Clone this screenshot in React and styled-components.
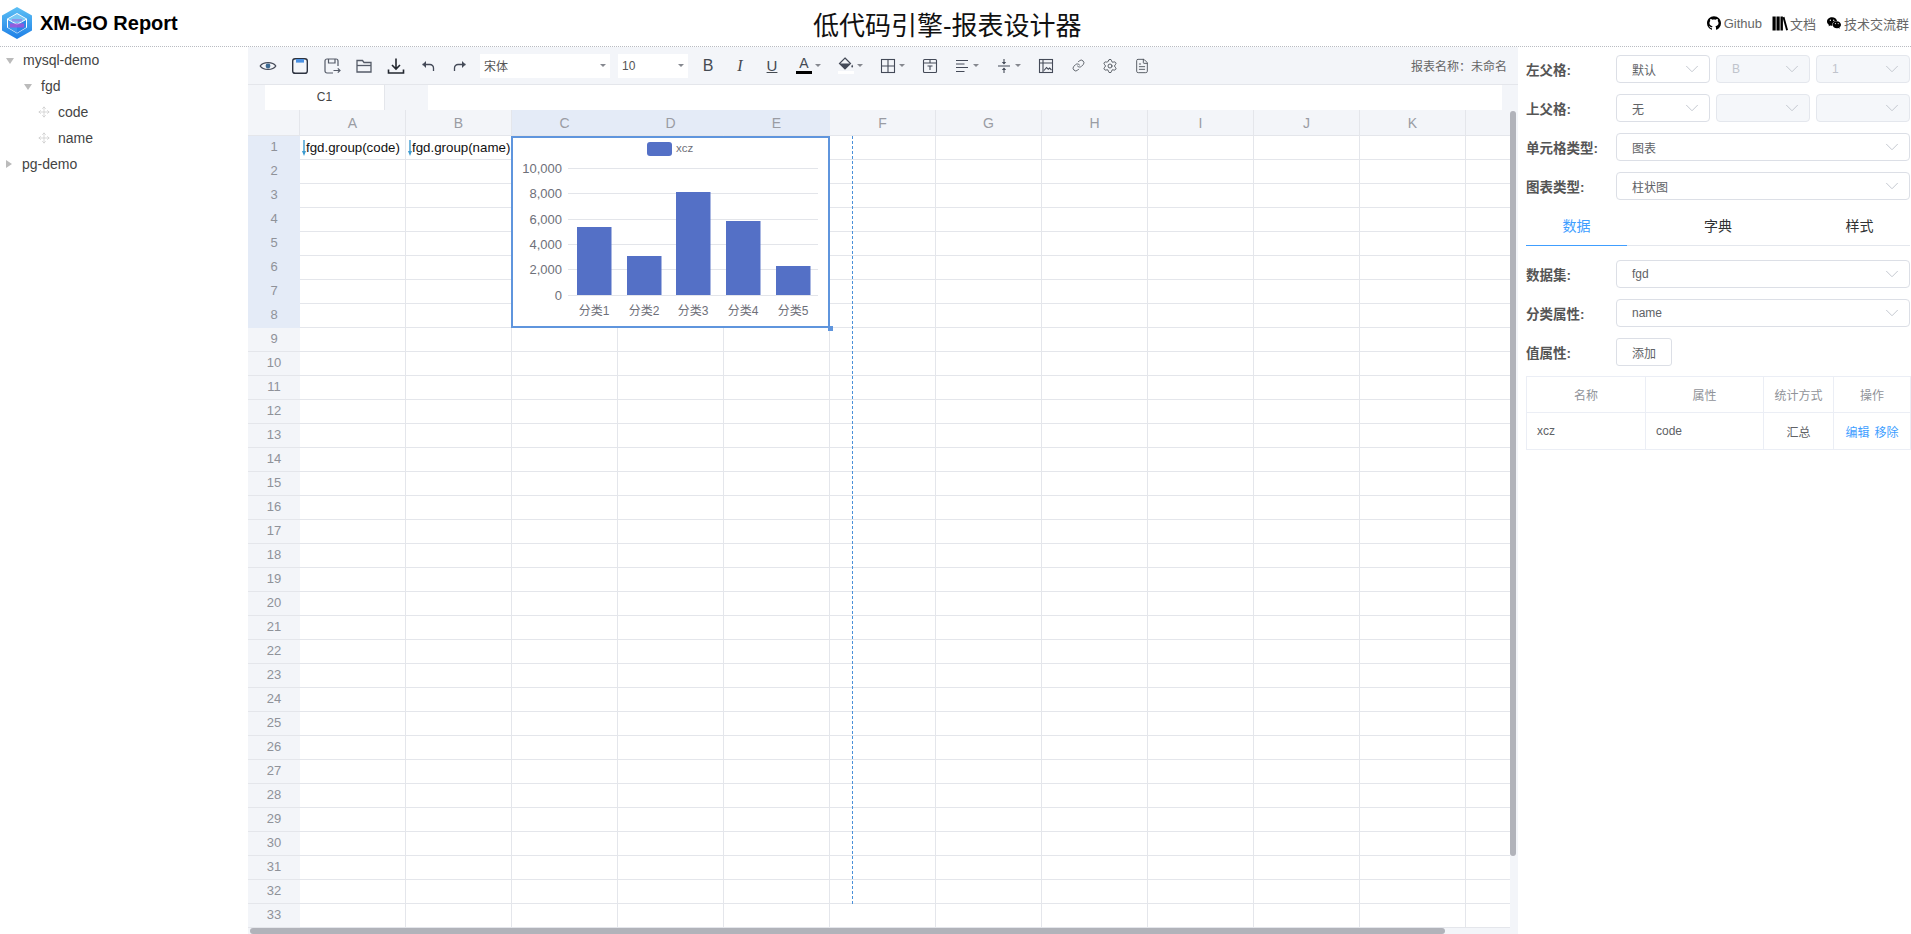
import React from 'react';
import styled, { createGlobalStyle } from 'styled-components';
import { AiFillGithub, AiFillWechat } from 'react-icons/ai';
import { Move, ChevronDown, Link, Settings, FileText } from 'lucide-react';

const FONT = '"Liberation Sans", "Noto Sans CJK SC", sans-serif';
const LINE = '#e4e6eb';
const BAR = '#f3f5f9';

const GlobalStyle = createGlobalStyle`
    html, body {
        margin: 0;
        height: 100%;
        overflow: hidden;
        background: #fff;
        font-family: ${FONT};
    }
`;

const Page = styled.div`
    display: flex;
    flex-direction: column;
    height: 934px;
    overflow: hidden;
`;

const Header = styled.header`
    display: flex;
    justify-content: space-between;
    align-items: center;
    height: 46px;
    flex: none;
    box-sizing: content-box;
    padding: 0 2px 0 1px;
    border-bottom: 1px dotted #b9bcc2;
`;

const Brand = styled.div`
    display: flex;
    align-items: center;
    gap: 7px;
    font-size: 20px;
    font-weight: 700;
    color: #000;
`;

const Title = styled.h1`
    margin: 0 0 0 11px;
    font-size: 26px;
    font-weight: 400;
    color: #111;
`;

const Links = styled.nav`
    display: flex;
    gap: 10px;
`;

const HeadLink = styled.a`
    display: flex;
    align-items: center;
    gap: 2px;
    font-size: 13px;
    color: #666;
    svg { color: #000; font-size: 16px; }
`;

const Main = styled.div`
    display: flex;
    flex: 1;
    min-height: 0;
`;

const Tree = styled.aside`
    width: 248px;
    flex: none;
`;

const TreeRow = styled.div`
    display: flex;
    align-items: center;
    height: 26px;
    padding-left: ${p => p.$depth * 18 + 6}px;
    font-size: 14px;
    color: #444;
`;

const Caret = styled.span`
    width: 0;
    height: 0;
    margin-right: 9px;
    border-style: solid;
    ${p => p.$open
        ? 'border-width: 6px 4px 0 4px; border-color: #bbb transparent transparent transparent; margin-top: 1px;'
        : 'border-width: 4px 0 4px 6px; border-color: transparent transparent transparent #bbb; margin-right: 10px;'}
`;

const Drag = styled.span`
    display: flex;
    width: 12px;
    margin-right: 8px;
    margin-left: -4px;
    color: #c8c8c8;
`;

const Sheet = styled.section`
    position: relative;
    display: flex;
    flex-direction: column;
    width: 1270px;
    flex: none;
    background: ${BAR};
`;

const Toolbar = styled.div`
    display: flex;
    align-items: center;
    height: 37px;
    flex: none;
    padding: 0 11px 0 4px;
    border-bottom: 1px solid ${LINE};
`;

const ToolBtn = styled.div`
    display: flex;
    align-items: center;
    justify-content: center;
    width: 32px;
    height: 24px;
    flex: none;
    margin-left: ${p => p.$gap || 0}px;
    font-size: ${p => p.$size || 16}px;
    color: #444a52;
`;

const SerifI = styled.em`
    font-family: "Liberation Serif", serif;
`;

const DropBtn = styled.div`
    display: flex;
    align-items: center;
    width: 42px;
    flex: none;
`;

const SmallCaret = styled.i`
    width: 0;
    height: 0;
    margin-left: -5px;
    border-style: solid;
    border-width: 3px 3px 0 3px;
    border-color: #85888f transparent transparent transparent;
`;

const ToolSelect = styled.div`
    display: flex;
    align-items: center;
    justify-content: space-between;
    width: ${p => p.$width}px;
    height: 24px;
    flex: none;
    margin-left: ${p => p.$gap}px;
    padding: 0 4px;
    box-sizing: border-box;
    background: #fff;
    font-size: 12px;
    color: #555;
`;

const ColorBar = styled.span`
    display: block;
    width: 16px;
    height: 3px;
    margin-top: 1px;
    background: ${p => p.$color};
`;

const Stack = styled.span`
    display: flex;
    flex-direction: column;
    align-items: center;
    line-height: 13px;
    font-size: 14px;
`;

const ReportName = styled.div`
    margin-left: auto;
    font-size: 12px;
    color: #666;
`;

const FormulaBar = styled.div`
    display: flex;
    height: 25px;
    flex: none;
    padding: 0 16px 0 17px;
`;

const NameBox = styled.div`
    width: 119px;
    flex: none;
    background: #fff;
    border-right: 1px solid ${LINE};
    text-align: center;
    font-size: 12px;
    line-height: 24px;
    color: #444;
`;

const FormulaInput = styled.div`
    flex: 1;
    margin-left: 43px;
    background: #fff;
`;

const GridWrap = styled.div`
    position: relative;
    width: 1262px;
    flex: 1;
    min-height: 0;
    overflow: hidden;
`;

const Grid = styled.div`
    display: grid;
    grid-template-columns: 52px repeat(12, 106px);
    grid-template-rows: 26px;
    grid-auto-rows: 24px;
`;

const ColHead = styled.div`
    display: flex;
    align-items: center;
    justify-content: center;
    box-sizing: border-box;
    background: ${p => (p.$active ? '#e4ebf7' : BAR)};
    border-right: 1px solid ${p => (p.$active ? '#e4ebf7' : LINE)};
    border-bottom: 1px solid ${LINE};
    font-size: 14px;
    color: #9a9ca3;
`;

const RowHead = styled.div`
    display: flex;
    align-items: center;
    justify-content: center;
    box-sizing: border-box;
    padding-bottom: 2px;
    background: ${p => (p.$active ? '#e4ebf7' : BAR)};
    border-bottom: 1px solid ${p => (p.$active ? '#e4ebf7' : LINE)};
    font-size: 13px;
    color: #8f9299;
`;

const Cell = styled.div`
    position: relative;
    display: flex;
    align-items: center;
    box-sizing: border-box;
    padding-left: 6px;
    background: #fff;
    border-right: 1px solid ${LINE};
    border-bottom: 1px solid ${LINE};
    font-size: 13.3px;
    white-space: nowrap;
    color: #111;
`;

const DownMark = styled.svg`
    position: absolute;
    left: 2px;
    top: 4px;
`;

const ChartBox = styled.div`
    position: absolute;
    left: 263px;
    top: 26px;
    width: 319px;
    height: 192px;
    box-sizing: border-box;
    border: 2px solid #5f95dd;
    background: #fff;
`;

const Handle = styled.span`
    position: absolute;
    right: -5px;
    bottom: -5px;
    width: 5px;
    height: 5px;
    background: #5f95dd;
`;

const PageBreak = styled.div`
    position: absolute;
    left: 604px;
    top: 26px;
    height: 768px;
    border-left: 1px dashed #4a90d9;
`;

const VScroll = styled.div`
    position: absolute;
    right: 2px;
    top: 64px;
    width: 6px;
    height: 745px;
    border-radius: 3px;
    background: #b1b3ba;
`;

const HScroll = styled.div`
    position: absolute;
    left: 2px;
    bottom: 0;
    width: 1195px;
    height: 6px;
    border-radius: 3px;
    background: #b1b3ba;
`;

const Panel = styled.aside`
    flex: 1;
    padding: 8px 1px 0 8px;
    min-width: 0;
`;

const FormRow = styled.div`
    display: flex;
    align-items: center;
    gap: 6px;
    height: 28px;
    margin-bottom: ${p => p.$gap ?? 11}px;
`;

const Label = styled.label`
    width: 84px;
    flex: none;
    font-size: 13.5px;
    font-weight: 700;
    color: #555;
`;

const Select = styled.div`
    display: flex;
    align-items: center;
    justify-content: space-between;
    width: ${p => (p.$wide ? 'auto' : '94px')};
    flex: ${p => (p.$wide ? 1 : 'none')};
    height: 28px;
    box-sizing: border-box;
    padding: 0 6px 0 15px;
    background: ${p => (p.$disabled ? '#f5f7fa' : '#fff')};
    border: 1px solid ${p => (p.$disabled ? '#e4e7ed' : '#dcdfe6')};
    border-radius: 4px;
    font-size: 12px;
    color: ${p => (p.$disabled ? '#c0c4cc' : '#606266')};
    svg { color: #c0c4cc; flex: none; }
`;

const Tabs = styled.div`
    display: flex;
    justify-content: space-between;
    height: 34px;
    margin-bottom: 14px;
    border-bottom: 1px solid #e4e7ed;
`;

const Tab = styled.div`
    width: 101px;
    height: 34px;
    line-height: 31px;
    text-align: center;
    font-size: 14px;
    color: ${p => (p.$active ? '#409eff' : '#303133')};
    border-bottom: 1px solid ${p => (p.$active ? '#409eff' : 'transparent')};
`;

const AddButton = styled.button`
    width: 56px;
    height: 28px;
    padding: 0;
    background: #fff;
    border: 1px solid #dcdfe6;
    border-radius: 3px;
    font-family: inherit;
    font-size: 12px;
    color: #606266;
`;

const Table = styled.table`
    width: 384px;
    table-layout: fixed;
    border-collapse: collapse;
    font-size: 12px;
    color: #606266;
    th, td { border: 1px solid #ebeef5; padding: 0; }
    th { height: 35px; font-weight: 400; color: #909399; }
    td { height: 36px; }
`;

const TextCell = styled.td`
    padding-left: 10px !important;
`;

const CenterCell = styled.td`
    text-align: center;
`;

const Action = styled.a`
    margin-left: ${p => (p.$first ? 0 : 5)}px;
    color: #409eff;
`;

const Logo = () => (
    <svg width="32" height="34" viewBox="0 0 32 34">
        <defs>
            <linearGradient id="hexFill" x1="0" y1="0" x2="0" y2="1">
                <stop offset="0" stopColor="#5cc0f5" />
                <stop offset="1" stopColor="#1e7fe6" />
            </linearGradient>
        </defs>
        <path d="M16 1 L31 9.5 V24.5 L16 33 L1 24.5 V9.5 Z M16 7 L6 12.8 V21.5 L16 27.5 L26 21.5 V12.8 Z" fill="url(#hexFill)" fillRule="evenodd" />
        <path d="M16 8 L25 13 L16 18 L7 13 Z" fill="#79c8f4" />
        <path d="M7 14 L16 19 V27 L7 21.5 Z" fill="#3f97ee" />
        <path d="M25 14 L16 19 V27 L25 21.5 Z" fill="#2c86e8" />
        <rect x="9" y="17.5" width="14" height="4" fill="#b04bd8" opacity=".75" />
        <rect x="11" y="13" width="10" height="2.5" fill="#9b6be0" opacity=".55" />
    </svg>
);

const BooksIcon = () => (
    <svg width="16" height="15" viewBox="0 0 16 15" fill="currentColor">
        <rect x="0.5" y="0.5" width="3.2" height="14" />
        <rect x="4.5" y="0.5" width="3.2" height="14" />
        <rect x="8.5" y="0.5" width="2.4" height="14" />
        <path d="M10.6 1.4 L12.4 0.8 L16 14 L14.2 14.6 Z" />
    </svg>
);

const Eye = () => (
    <svg width="18" height="18" viewBox="0 0 18 18">
        <path d="M1.2 9 C4 4.4 14 4.4 16.8 9 C14 13.6 4 13.6 1.2 9 Z" fill="none" stroke="#444a58" strokeWidth="1.3" />
        <circle cx="9" cy="9" r="2.4" fill="#3d6a92" />
    </svg>
);

const SaveIcon = () => (
    <svg width="18" height="18" viewBox="0 0 18 18">
        <rect x="1.7" y="1.7" width="14.6" height="14.6" rx="2.4" fill="none" stroke="#2d3340" strokeWidth="1.4" />
        <rect x="5" y="2" width="8" height="3.6" fill="#4a90e2" />
    </svg>
);

const SaveAsIcon = () => (
    <svg width="18" height="18" viewBox="0 0 18 18" fill="none" stroke="#555b68" strokeWidth="1.2">
        <path d="M10 16 H4 a2 2 0 0 1 -2 -2 V4 a2 2 0 0 1 2 -2 H13 a2 2 0 0 1 2 2 V9" />
        <path d="M5.5 2 V6 H12 V2" />
        <path d="M10.5 13.5 H17 M14.8 11.3 L17 13.5 L14.8 15.7" />
    </svg>
);

const FolderIcon = () => (
    <svg width="18" height="18" viewBox="0 0 18 18" fill="none" stroke="#555b68" strokeWidth="1.3">
        <path d="M2 3.5 H7.5 L9 5.5 H16 V15 H2 Z" />
        <path d="M2 8.5 H16" />
    </svg>
);

const DownloadIcon = () => (
    <svg width="18" height="18" viewBox="0 0 18 18" fill="none" stroke="#23272f" strokeWidth="1.6">
        <path d="M9 1.5 V11.5 M5 8 L9 12 L13 8" />
        <path d="M1.5 12.5 V16 H16.5 V12.5" />
    </svg>
);

const FlipWrap = styled.span`
    display: flex;
    transform: ${p => (p.$flip ? 'scaleX(-1)' : 'none')};
`;

const UndoIcon = ({ flip }) => (
    <FlipWrap $flip={flip}>
        <svg width="14" height="14" viewBox="0 0 14 14" fill="none" stroke="#444a58" strokeWidth="1.3">
            <path d="M1.5 5.5 H9 a3.5 3.5 0 0 1 3.5 3.5 V12" />
            <path d="M5 2 L1.5 5.5 L5 9" fill="#444a58" stroke="none" />
        </svg>
    </FlipWrap>
);

const BucketIcon = () => (
    <svg width="16" height="13" viewBox="0 0 16 13">
        <path d="M7 1 L12.5 6.5 L7 12 L1.5 6.5 Z" fill="none" stroke="#444a58" strokeWidth="1.2" />
        <path d="M1.5 6.5 H12.5 L7 12 Z" fill="#444a58" />
        <path d="M14.2 7.5 C15.4 9.2 15.4 10.5 14.2 10.5 C13 10.5 13 9.2 14.2 7.5 Z" fill="#444a58" />
    </svg>
);

const BorderIcon = () => (
    <svg width="16" height="16" viewBox="0 0 16 16" fill="none" stroke="#444a58" strokeWidth="1.1">
        <rect x="1.5" y="1.5" width="13" height="13" />
        <path d="M8 1.5 V14.5 M1.5 8 H14.5" />
    </svg>
);

const MergeIcon = () => (
    <svg width="16" height="16" viewBox="0 0 16 16" fill="none" stroke="#444a58" strokeWidth="1.1">
        <rect x="1.5" y="1.5" width="13" height="13" rx="1" />
        <path d="M1.5 5 H14.5 M8 1.5 V5 M5.5 8 H10.5 M8 8 V12" />
    </svg>
);

const AlignIcon = () => (
    <svg width="14" height="14" viewBox="0 0 14 14" stroke="#444a58" strokeWidth="1.1">
        <path d="M1 1.5 H13 M1 5 H9.5 M1 8.5 H13 M1 12.5 H9.5" />
    </svg>
);

const ValignIcon = () => (
    <svg width="14" height="16" viewBox="0 0 14 16" fill="none" stroke="#444a58" strokeWidth="1.1">
        <path d="M1 8 H13 M7 1 V5.5 M7 10.5 V15" />
        <path d="M4.8 4 L7 6.4 L9.2 4 Z M4.8 12 L7 9.6 L9.2 12 Z" fill="#444a58" stroke="none" />
    </svg>
);

const ImageCellIcon = () => (
    <svg width="16" height="16" viewBox="0 0 16 16" fill="none" stroke="#444a58" strokeWidth="1.1">
        <rect x="1.5" y="1.5" width="13" height="13" />
        <path d="M1.5 5 H14.5 M5 1.5 V14.5 M6 12.5 L8.5 9.5 L10.3 11.2 L11.6 10 L13.5 12" />
    </svg>
);

const BAR_DATA = [
    { label: '分类1', x: 64, top: 90 },
    { label: '分类2', x: 114, top: 119 },
    { label: '分类3', x: 163, top: 55 },
    { label: '分类4', x: 213, top: 84 },
    { label: '分类5', x: 263, top: 129 },
];

const TICKS = [
    { label: '10,000', y: 31 },
    { label: '8,000', y: 56 },
    { label: '6,000', y: 82 },
    { label: '4,000', y: 107 },
    { label: '2,000', y: 132 },
    { label: '0', y: 158 },
];

// coordinates are relative to the inner area of the selection box
const BarChart = () => (
    <svg width="315" height="188" viewBox="0 1 315 188" fontFamily={FONT} fontSize="12" fill="#6e7079">
        <rect x="134" y="5" width="25" height="14" rx="3" fill="#5470c6" />
        <text x="163" y="15" fontSize="11.5">xcz</text>
        {TICKS.map(t => (
            <g key={t.label}>
                <line x1="55" x2="305" y1={t.y + 0.5} y2={t.y + 0.5} stroke="#e3e5ea" />
                <text x="49" y={t.y + 4.5} fontSize="13" textAnchor="end">{t.label}</text>
            </g>
        ))}
        {BAR_DATA.map(b => (
            <g key={b.label}>
                <rect x={b.x} y={b.top} width="34.5" height={158 - b.top} fill="#5470c6" />
                <text x={b.x + 17} y="178" textAnchor="middle">{b.label}</text>
            </g>
        ))}
    </svg>
);

// L only peeks in at the right edge, its letter is scrolled out of view
const COLUMNS = 'ABCDEFGHIJKL'.split('');
const ACTIVE_COLS = ['C', 'D', 'E'];
const ROW_COUNT = 33;

const CELLS = { A1: 'fgd.group(code)', B1: 'fgd.group(name)' };

const SheetGrid = () => (
    <Grid>
        <ColHead />
        {COLUMNS.map(c => (
            <ColHead key={c} $active={ACTIVE_COLS.includes(c)}>{c === 'L' ? '' : c}</ColHead>
        ))}
        {Array.from({ length: ROW_COUNT }, (_, i) => i + 1).map(row => (
            <React.Fragment key={row}>
                <RowHead $active={row <= 8}>{row}</RowHead>
                {COLUMNS.map(c => {
                    const value = CELLS[c + row];
                    return (
                        <Cell key={c}>
                            {value && (
                                <DownMark width="4" height="16" viewBox="0 0 4 16">
                                    <path d="M2 0 V12" stroke="#3d9bd0" strokeWidth="1.4" />
                                    <path d="M0 11 H4 L2 16 Z" fill="#3d9bd0" />
                                </DownMark>
                            )}
                            {value}
                        </Cell>
                    );
                })}
            </React.Fragment>
        ))}
    </Grid>
);

const Dropdown = ({ children }) => <DropBtn><ToolBtn>{children}</ToolBtn><SmallCaret /></DropBtn>;

const ToolbarRow = () => (
    <Toolbar>
        <ToolBtn><Eye /></ToolBtn>
        <ToolBtn><SaveIcon /></ToolBtn>
        <ToolBtn><SaveAsIcon /></ToolBtn>
        <ToolBtn><FolderIcon /></ToolBtn>
        <ToolBtn><DownloadIcon /></ToolBtn>
        <ToolBtn><UndoIcon /></ToolBtn>
        <ToolBtn><UndoIcon flip /></ToolBtn>
        <ToolSelect $width={130} $gap={4}>宋体<SmallCaret /></ToolSelect>
        <ToolSelect $width={70} $gap={8}>10<SmallCaret /></ToolSelect>
        <ToolBtn $size={16} $gap={4}>B</ToolBtn>
        <ToolBtn $size={16}><SerifI>I</SerifI></ToolBtn>
        <ToolBtn $size={15}><u>U</u></ToolBtn>
        <Dropdown><Stack>A<ColorBar $color="#000" /></Stack></Dropdown>
        <Dropdown><Stack><BucketIcon /><ColorBar $color="#fff" /></Stack></Dropdown>
        <Dropdown><BorderIcon /></Dropdown>
        <ToolBtn><MergeIcon /></ToolBtn>
        <Dropdown><AlignIcon /></Dropdown>
        <Dropdown><ValignIcon /></Dropdown>
        <ToolBtn><ImageCellIcon /></ToolBtn>
        <ToolBtn><Link size={13} strokeWidth={1.5} /></ToolBtn>
        <ToolBtn><Settings size={16} strokeWidth={1.3} /></ToolBtn>
        <ToolBtn><FileText size={16} strokeWidth={1.3} /></ToolBtn>
        <ReportName>报表名称：未命名</ReportName>
    </Toolbar>
);

const Choice = ({ wide, disabled, children }) => (
    <Select $wide={wide} $disabled={disabled}>
        <span>{children}</span>
        <ChevronDown size={22} strokeWidth={1} />
    </Select>
);

const TreeItem = ({ depth, open, leaf, children }) => (
    <TreeRow $depth={depth}>
        {leaf
            ? <Drag><Move size={12} strokeWidth={1.4} /></Drag>
            : <Caret $open={open} />}
        {children}
    </TreeRow>
);

const App = () => (
    <Page>
        <GlobalStyle />
        <Header>
            <Brand><Logo />XM-GO Report</Brand>
            <Title>低代码引擎-报表设计器</Title>
            <Links>
                <HeadLink><AiFillGithub />Github</HeadLink>
                <HeadLink><BooksIcon />文档</HeadLink>
                <HeadLink><AiFillWechat />技术交流群</HeadLink>
            </Links>
        </Header>
        <Main>
            <Tree>
                <TreeItem depth={0} open>mysql-demo</TreeItem>
                <TreeItem depth={1} open>fgd</TreeItem>
                <TreeItem depth={2} leaf>code</TreeItem>
                <TreeItem depth={2} leaf>name</TreeItem>
                <TreeItem depth={0}>pg-demo</TreeItem>
            </Tree>
            <Sheet>
                <ToolbarRow />
                <FormulaBar>
                    <NameBox>C1</NameBox>
                    <FormulaInput />
                </FormulaBar>
                <GridWrap>
                    <SheetGrid />
                    <ChartBox>
                        <BarChart />
                        <Handle />
                    </ChartBox>
                    <PageBreak />
                </GridWrap>
                <VScroll />
                <HScroll />
            </Sheet>
            <Panel>
                <FormRow>
                    <Label>左父格:</Label>
                    <Choice>默认</Choice>
                    <Choice disabled>B</Choice>
                    <Choice disabled>1</Choice>
                </FormRow>
                <FormRow>
                    <Label>上父格:</Label>
                    <Choice>无</Choice>
                    <Choice disabled />
                    <Choice disabled />
                </FormRow>
                <FormRow>
                    <Label>单元格类型:</Label>
                    <Choice wide>图表</Choice>
                </FormRow>
                <FormRow>
                    <Label>图表类型:</Label>
                    <Choice wide>柱状图</Choice>
                </FormRow>
                <Tabs>
                    <Tab $active>数据</Tab>
                    <Tab>字典</Tab>
                    <Tab>样式</Tab>
                </Tabs>
                <FormRow>
                    <Label>数据集:</Label>
                    <Choice wide>fgd</Choice>
                </FormRow>
                <FormRow>
                    <Label>分类属性:</Label>
                    <Choice wide>name</Choice>
                </FormRow>
                <FormRow $gap={10}>
                    <Label>值属性:</Label>
                    <AddButton>添加</AddButton>
                </FormRow>
                <Table>
                    <colgroup>
                        <col width="119" />
                        <col width="118" />
                        <col width="70" />
                        <col width="77" />
                    </colgroup>
                    <thead>
                        <tr><th>名称</th><th>属性</th><th>统计方式</th><th>操作</th></tr>
                    </thead>
                    <tbody>
                        <tr>
                            <TextCell>xcz</TextCell>
                            <TextCell>code</TextCell>
                            <CenterCell>汇总</CenterCell>
                            <CenterCell><Action $first>编辑</Action><Action>移除</Action></CenterCell>
                        </tr>
                    </tbody>
                </Table>
            </Panel>
        </Main>
    </Page>
);

export default App;
